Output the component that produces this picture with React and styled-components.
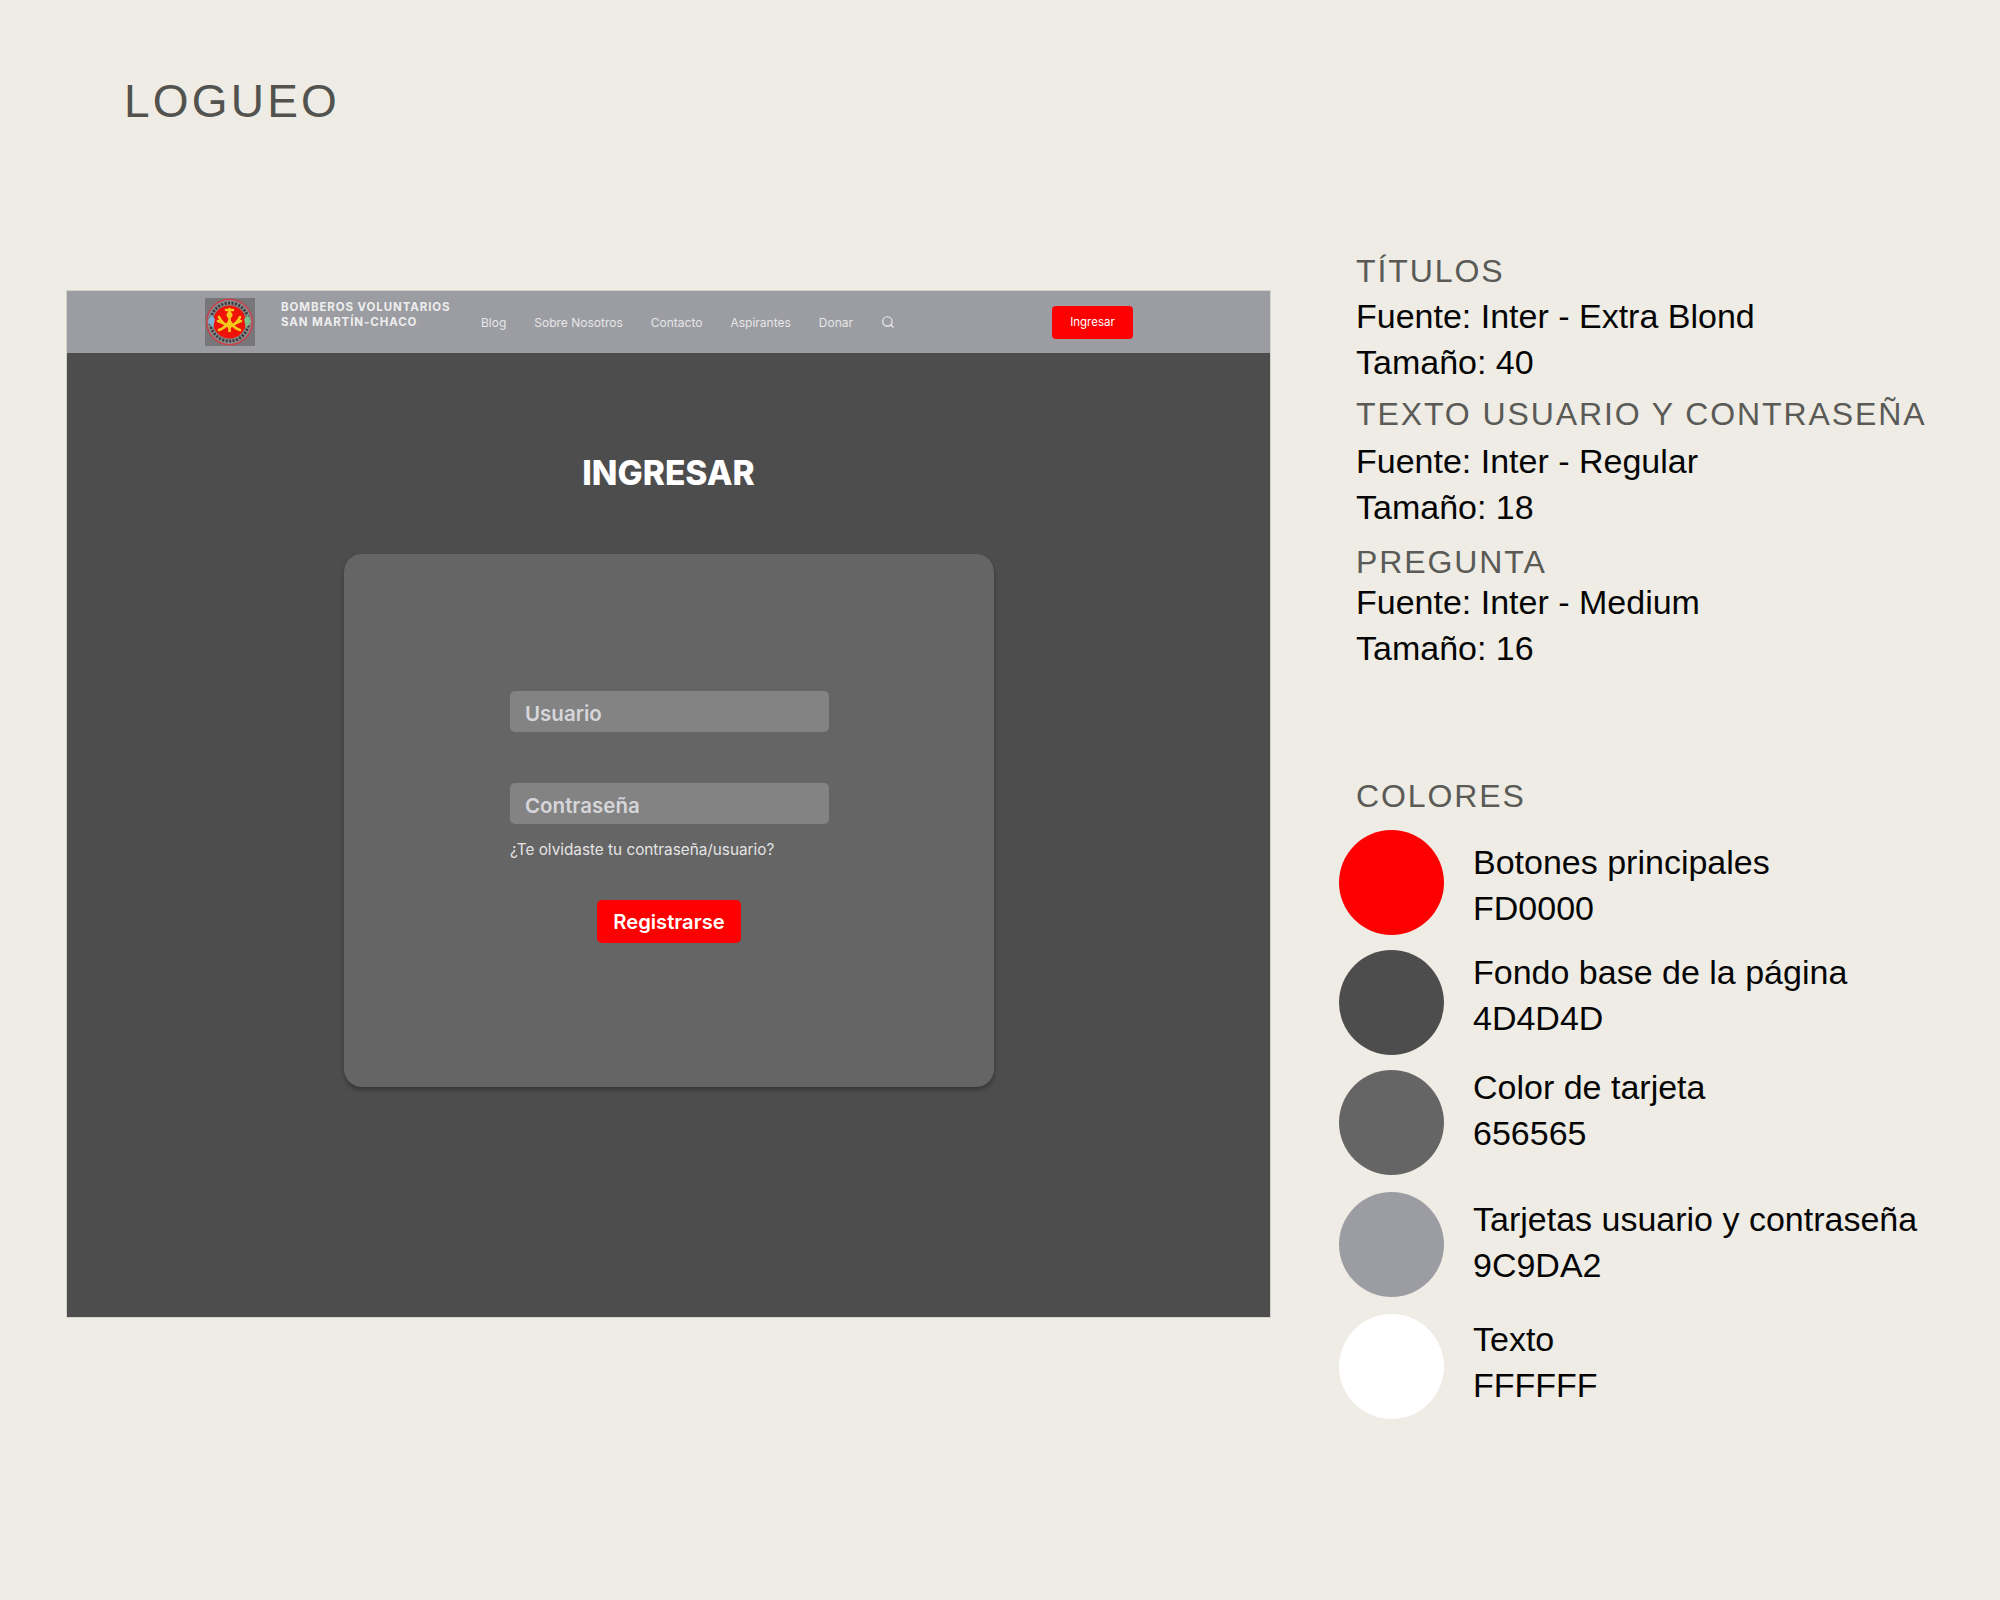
import React from "react";
import styled, { createGlobalStyle } from "styled-components";
import { Search } from "lucide-react";

const GlobalStyle = createGlobalStyle`
html, body {
    margin: 0;
    padding: 0;
    background: #eeece4;
}
`;

const Page = styled.div`
width: 2000px;
height: 1600px;
box-sizing: border-box;
padding: 71px 0 0 67px;
background: #eeece4;
font-family: "Liberation Sans", Arial, sans-serif;
overflow: hidden;
`;

const PageTitle = styled.h1`
margin: 0 0 0 57px;
font-size: 46px;
line-height: 60px;
font-weight: 400;
letter-spacing: 3.2px;
color: #52524e;
`;

const Columns = styled.div`
display: flex;
align-items: flex-start;
gap: 69px;
margin-top: 115px;
`;

const Mockup = styled.div`
width: 1203px;
height: 1026px;
margin-top: 45px;
flex-shrink: 0;
display: flex;
flex-direction: column;
background: #4d4d4d;
box-shadow: 0 0 0 1px #d3d2cd;
font-family: Inter, sans-serif;
`;

const NavBar = styled.div`
height: 62px;
display: flex;
align-items: center;
padding: 0 137px 0 138px;
background: #9c9da2;
`;

const Logo = styled.svg`
width: 50px;
height: 48px;
flex-shrink: 0;
margin-right: 26px;
`;

const Brand = styled.div`
width: 200px;
margin-top: -15px;
font-size: 11.5px;
line-height: 15px;
font-weight: 700;
letter-spacing: 0.9px;
color: #eeeeee;
`;

const NavLinks = styled.div`
display: flex;
align-items: center;
gap: 28px;
`;

const NavLink = styled.span`
font-size: 12px;
font-weight: 400;
color: #e6e6e8;
`;

const LoginButton = styled.div`
width: 81px;
height: 33px;
margin-left: auto;
display: flex;
align-items: center;
justify-content: center;
border-radius: 4px;
background: #fd0000;
color: #ffffff;
font-size: 11.5px;
`;

const LoginTitle = styled.h2`
margin: 98px 0 0;
text-align: center;
font-size: 33.5px;
line-height: 44px;
font-weight: 800;
color: #ffffff;
`;

const Card = styled.div`
width: 650px;
height: 533px;
box-sizing: border-box;
margin: 59px 0 0 277px;
padding: 137px 0 0 166px;
border-radius: 18px;
background: #656565;
box-shadow: 0 3px 4px rgba(0, 0, 0, 0.3);
`;

const Field = styled.input`
display: block;
width: 319px;
height: 41px;
box-sizing: border-box;
margin-bottom: ${({ $gap }) => $gap}px;
padding: 4px 15px 0;
border: none;
border-radius: 5px;
background: #838383;
font-family: Inter, sans-serif;
font-size: 20.5px;
font-weight: 600;
&::placeholder {
    color: #d6d6da;
    opacity: 1;
}
`;

const Question = styled.div`
font-size: 15.3px;
line-height: 18px;
color: #e4e4e4;
`;

const Register = styled.div`
width: 144px;
height: 43px;
margin: 41px 0 0 87px;
display: flex;
align-items: center;
justify-content: center;
border-radius: 5px;
background: #fd0000;
color: #ffffff;
font-size: 20.2px;
font-weight: 600;
`;

const Specs = styled.div`
display: flex;
flex-direction: column;
margin-top: 2px;
padding-left: 17px;
`;

const SpecHeading = styled.div`
margin-top: ${({ $top }) => $top || 0}px;
font-size: 32px;
line-height: 46px;
letter-spacing: 1.9px;
color: #5a5a57;
`;

const SpecLine = styled.div`
margin-top: ${({ $top }) => $top || 0}px;
font-size: 34px;
line-height: 46px;
color: #050505;
`;

const ColorList = styled.div`
display: flex;
flex-direction: column;
margin: 11px 0 0 -17px;
`;

const ColorRow = styled.div`
height: 105px;
margin-bottom: ${({ $gap }) => $gap}px;
display: flex;
align-items: flex-start;
gap: 29px;
`;

const Swatch = styled.div`
width: 105px;
height: 105px;
flex-shrink: 0;
border-radius: 50%;
background: ${({ $color }) => $color};
`;

const SwatchText = styled.div`
margin-top: ${({ $top }) => $top}px;
`;

const specs = [
    { title: "TÍTULOS", font: "Fuente: Inter - Extra Blond", size: "Tamaño: 40", top: 0, fontTop: -1 },
    { title: "TEXTO USUARIO Y CONTRASEÑA", font: "Fuente: Inter - Regular", size: "Tamaño: 18", top: 6, fontTop: 1 },
    { title: "PREGUNTA", font: "Fuente: Inter - Medium", size: "Tamaño: 16", top: 9, fontTop: -6 },
];

const colors = [
    { color: "#fd0000", name: "Botones principales", hex: "FD0000", top: 9, gap: 15 },
    { color: "#4d4d4d", name: "Fondo base de la página", hex: "4D4D4D", top: -1, gap: 15 },
    { color: "#656565", name: "Color de tarjeta", hex: "656565", top: -6, gap: 17 },
    { color: "#9c9da2", name: "Tarjetas usuario y contraseña", hex: "9C9DA2", top: 4, gap: 17 },
    { color: "#ffffff", name: "Texto", hex: "FFFFFF", top: 2, gap: 0 },
];

const links = ["Blog", "Sobre Nosotros", "Contacto", "Aspirantes", "Donar"];

const BomberosLogo = () => (
    <Logo viewBox="0 0 50 48">
        <rect width="50" height="48" fill="#77777a" />
        <circle cx="24.5" cy="24" r="23.5" fill="#c9404a" />
        <circle cx="24.5" cy="24" r="22" fill="#8b8a8c" />
        <circle cx="24.5" cy="24" r="19" fill="none" stroke="#3a3a3c" strokeWidth="3" strokeDasharray="2 1.5" />
        <circle cx="24.5" cy="24" r="16.5" fill="#ee1208" />
        <path d="M3 24 L6 17 L10 21 L8 30 Z" fill="#7fb4d8" />
        <path d="M46 24 L43 17 L39 21 L41 30 Z" fill="#7cc08a" />
        <g stroke="#f5c81c" strokeWidth="2.6" fill="none" strokeLinecap="round">
            <path d="M24.5 11 V33" />
            <path d="M21 12 H28" />
            <path d="M24.5 29 C20 27 16 24 14 19" />
            <path d="M24.5 29 C29 27 33 24 35 19" />
            <path d="M24.5 23 C21 29 17 31 14 32" />
            <path d="M24.5 23 C28 29 32 31 35 32" />
            <path d="M13 23 L18 25 M36 23 L31 25" />
        </g>
        <circle cx="24.5" cy="17" r="3" fill="#f5c81c" />
    </Logo>
);

const App = () => {
    return (
        <Page>
            <GlobalStyle />
            <PageTitle>LOGUEO</PageTitle>
            <Columns>
                <Mockup>
                    <NavBar>
                        <BomberosLogo />
                        <Brand>
                            BOMBEROS VOLUNTARIOS
                            <br />
                            SAN MARTÍN-CHACO
                        </Brand>
                        <NavLinks>
                            {links.map((link) => (
                                <NavLink key={link}>{link}</NavLink>
                            ))}
                            <Search size={14} color="#f0f0f2" strokeWidth={2} />
                        </NavLinks>
                        <LoginButton>Ingresar</LoginButton>
                    </NavBar>
                    <LoginTitle>INGRESAR</LoginTitle>
                    <Card>
                        <Field $gap={51} placeholder="Usuario" readOnly />
                        <Field $gap={17} placeholder="Contraseña" readOnly />
                        <Question>¿Te olvidaste tu contraseña/usuario?</Question>
                        <Register>Registrarse</Register>
                    </Card>
                </Mockup>
                <Specs>
                    {specs.map((spec) => (
                        <React.Fragment key={spec.title}>
                            <SpecHeading $top={spec.top}>{spec.title}</SpecHeading>
                            <SpecLine $top={spec.fontTop}>{spec.font}</SpecLine>
                            <SpecLine>{spec.size}</SpecLine>
                        </React.Fragment>
                    ))}
                    <SpecHeading $top={102}>COLORES</SpecHeading>
                    <ColorList>
                        {colors.map((item) => (
                            <ColorRow key={item.hex} $gap={item.gap}>
                                <Swatch $color={item.color} />
                                <SwatchText $top={item.top}>
                                    <SpecLine>{item.name}</SpecLine>
                                    <SpecLine>{item.hex}</SpecLine>
                                </SwatchText>
                            </ColorRow>
                        ))}
                    </ColorList>
                </Specs>
            </Columns>
        </Page>
    );
};

export default App;
